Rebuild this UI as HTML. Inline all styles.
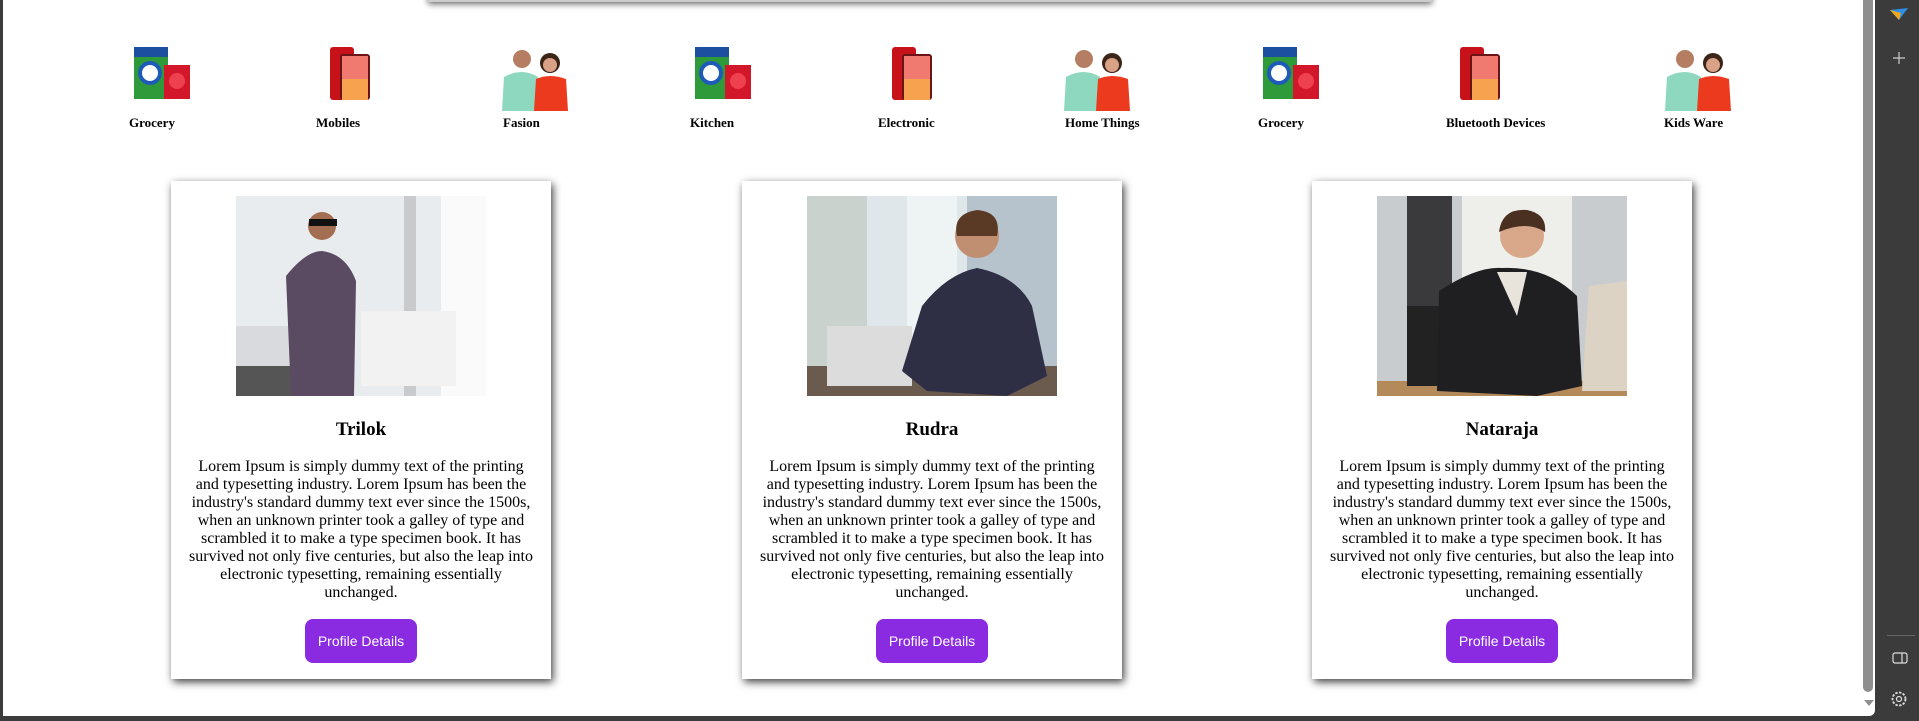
<!DOCTYPE html>
<html><head><meta charset="utf-8"><style>
*{margin:0;padding:0;box-sizing:border-box}
html,body{width:1919px;height:721px;overflow:hidden;background:#3b3b3b}
#page{position:absolute;left:3px;top:0;width:1872px;height:716px;background:#fff;border-bottom-right-radius:6px;overflow:hidden}
.banner{position:absolute;left:425px;top:-20px;width:1004px;height:22px;background:#ccc;box-shadow:0 2px 6px rgba(0,0,0,.6)}
.lab{position:absolute;top:115px;font:bold 13px "Liberation Serif",serif;white-space:nowrap}
.ic{position:absolute;top:47px}
.card{position:absolute;top:181px;width:380px;height:498px;background:#fff;box-shadow:2px 3px 8px rgba(0,0,0,.75);text-align:center}
.card svg{position:absolute;left:65px;top:15px}
.card h2{position:absolute;top:238px;left:0;width:100%;font:bold 19px "Liberation Serif",serif}
.card p{position:absolute;top:277px;left:17px;width:346px;font:16px/18px "Liberation Serif",serif}
.btn{position:absolute;left:134px;top:438px;width:112px;height:44px;border-radius:8px;background:#8a2be2;color:#fff;font:14px/44px "Liberation Sans",sans-serif}
.sb{position:absolute;left:1860px;top:0;width:10px;height:692px;background:#8e8e8e;border-radius:0 0 5px 5px}
.side{position:absolute;left:1879px;top:0;width:40px;height:721px;background:#3b3b3b}
</style></head><body>
<div id="page">
<div class="banner"></div>
<svg width="0" height="0" style="position:absolute"><defs>
<g id="groc"><rect x="0" y="0" width="34" height="52" fill="#2f9a3a"/><rect x="0" y="0" width="34" height="10" fill="#1d4fa0"/><circle cx="16" cy="26" r="12" fill="#1e5bb8"/><circle cx="16" cy="26" r="8" fill="#fff"/><rect x="30" y="18" width="26" height="34" fill="#d3172a"/><circle cx="43" cy="34" r="8" fill="#ef4050"/></g>
<g id="mob"><rect x="0" y="0" width="24" height="53" rx="3" fill="#c8121a"/><rect x="10" y="7" width="30" height="46" rx="3" fill="#6a1418"/><rect x="12" y="9" width="26" height="44" fill="#f07a70"/><rect x="12" y="32" width="26" height="21" fill="#f6a24e"/></g>
<g id="ppl"><circle cx="20" cy="12" r="9" fill="#b57e62"/><path d="M0 64 L2 30 Q20 20 36 30 L38 64Z" fill="#8fd8c0"/><circle cx="48" cy="16" r="10" fill="#3b2418"/><circle cx="48" cy="18" r="7" fill="#d9a186"/><path d="M32 64 L34 32 Q48 26 64 32 L66 64Z" fill="#ec3a1e"/></g>
</defs></svg>
<svg class="ic" style="left:131px" width="58" height="53"><use href="#groc"/></svg><div class="lab" style="left:126px">Grocery</div>
<svg class="ic" style="left:327px" width="42" height="53"><use href="#mob"/></svg><div class="lab" style="left:313px">Mobiles</div>
<svg class="ic" style="left:499px" width="71" height="64"><use href="#ppl"/></svg><div class="lab" style="left:500px">Fasion</div>
<svg class="ic" style="left:692px" width="58" height="53"><use href="#groc"/></svg><div class="lab" style="left:687px">Kitchen</div>
<svg class="ic" style="left:889px" width="42" height="53"><use href="#mob"/></svg><div class="lab" style="left:875px">Electronic</div>
<svg class="ic" style="left:1061px" width="71" height="64"><use href="#ppl"/></svg><div class="lab" style="left:1062px">Home Things</div>
<svg class="ic" style="left:1260px" width="58" height="53"><use href="#groc"/></svg><div class="lab" style="left:1255px">Grocery</div>
<svg class="ic" style="left:1457px" width="42" height="53"><use href="#mob"/></svg><div class="lab" style="left:1443px">Bluetooth Devices</div>
<svg class="ic" style="left:1662px" width="71" height="64"><use href="#ppl"/></svg><div class="lab" style="left:1661px">Kids Ware</div>

<div class="card" style="left:168px">
<svg width="250" height="200"><rect width="250" height="200" fill="#e9ecee"/><rect x="205" y="0" width="45" height="200" fill="#fafafa"/><rect x="168" y="0" width="12" height="200" fill="#c8cacb"/><rect x="0" y="130" width="60" height="70" fill="#d8dadd"/><rect x="125" y="115" width="95" height="75" fill="#f2f2f2"/><rect x="0" y="170" width="70" height="30" fill="#555"/><circle cx="86" cy="30" r="14" fill="#a36e52"/><rect x="73" y="23" width="28" height="7" fill="#111"/><path d="M55 200 L50 80 Q70 55 86 55 Q110 58 120 85 L118 200Z" fill="#5a4a62"/></svg>
<h2>Trilok</h2>
<p>Lorem Ipsum is simply dummy text of the printing and typesetting industry. Lorem Ipsum has been the industry's standard dummy text ever since the 1500s, when an unknown printer took a galley of type and scrambled it to make a type specimen book. It has survived not only five centuries, but also the leap into electronic typesetting, remaining essentially unchanged.</p>
<div class="btn">Profile Details</div></div>

<div class="card" style="left:739px">
<svg width="250" height="200"><rect width="250" height="200" fill="#dfe7ea"/><rect x="0" y="0" width="60" height="200" fill="#c9d2cc"/><rect x="100" y="0" width="50" height="200" fill="#eef3f4"/><rect x="160" y="0" width="90" height="200" fill="#b7c3cc"/><rect x="0" y="170" width="250" height="30" fill="#6b5a4e"/><rect x="20" y="130" width="85" height="60" fill="#dcdcdc"/><circle cx="170" cy="40" r="22" fill="#c08f72"/><path d="M170 14 Q145 18 150 40 L190 40 Q195 16 170 14Z" fill="#5a3a24"/><path d="M95 175 L115 110 Q140 78 170 72 Q210 80 225 110 L240 180 L200 200 L120 195Z" fill="#2e2f45"/></svg>
<h2>Rudra</h2>
<p>Lorem Ipsum is simply dummy text of the printing and typesetting industry. Lorem Ipsum has been the industry's standard dummy text ever since the 1500s, when an unknown printer took a galley of type and scrambled it to make a type specimen book. It has survived not only five centuries, but also the leap into electronic typesetting, remaining essentially unchanged.</p>
<div class="btn">Profile Details</div></div>

<div class="card" style="left:1309px">
<svg width="250" height="200"><rect width="250" height="200" fill="#c9ccce"/><rect x="30" y="0" width="45" height="200" fill="#3a3a3c"/><rect x="85" y="0" width="110" height="140" fill="#eeeeea"/><rect x="0" y="185" width="250" height="15" fill="#b48a5a"/><rect x="30" y="110" width="40" height="80" fill="#222"/><circle cx="145" cy="40" r="22" fill="#d9a88a"/><path d="M122 36 Q125 12 150 14 Q170 18 168 36 Q150 24 122 36Z" fill="#4a3020"/><path d="M60 195 L62 95 Q100 70 125 72 Q170 70 200 100 L205 190 L160 200Z" fill="#1f1f22"/><path d="M120 76 L140 120 L150 76Z" fill="#e8e4dc"/><path d="M212 90 L250 85 L250 195 L205 195Z" fill="#ddd3c5"/></svg>
<h2>Nataraja</h2>
<p>Lorem Ipsum is simply dummy text of the printing and typesetting industry. Lorem Ipsum has been the industry's standard dummy text ever since the 1500s, when an unknown printer took a galley of type and scrambled it to make a type specimen book. It has survived not only five centuries, but also the leap into electronic typesetting, remaining essentially unchanged.</p>
<div class="btn">Profile Details</div></div>
<div class="sb"></div>
<div style="position:absolute;left:1861px;top:700px;width:0;height:0;border-left:5px solid transparent;border-right:5px solid transparent;border-top:6px solid #8e8e8e"></div>
</div>
<div class="side">
<svg style="position:absolute;left:10px;top:7px" width="20" height="14"><path d="M1 3 L19 1 L10 13 Z" fill="#2d8fe8"/><path d="M1 3 L12 6 L10 13Z" fill="#f2a81d"/></svg>
<svg style="position:absolute;left:13px;top:51px" width="14" height="14"><path d="M7 1V13M1 7H13" stroke="#ccc" stroke-width="1.2"/></svg>
<div style="position:absolute;left:8px;top:635px;width:28px;height:1px;background:#666"></div>
<svg style="position:absolute;left:13px;top:652px" width="16" height="12"><rect x="1" y="1" width="14" height="10" rx="2" fill="none" stroke="#ddd" stroke-width="1.2"/><path d="M10 1V11" stroke="#ddd" stroke-width="1.2"/></svg>
<svg style="position:absolute;left:11px;top:690px" width="18" height="18"><circle cx="9" cy="9" r="6.5" fill="none" stroke="#ddd" stroke-width="1.8" stroke-dasharray="2.4 1.4"/><circle cx="9" cy="9" r="2.5" fill="none" stroke="#ddd" stroke-width="1.2"/></svg>
</div>
</body></html>
